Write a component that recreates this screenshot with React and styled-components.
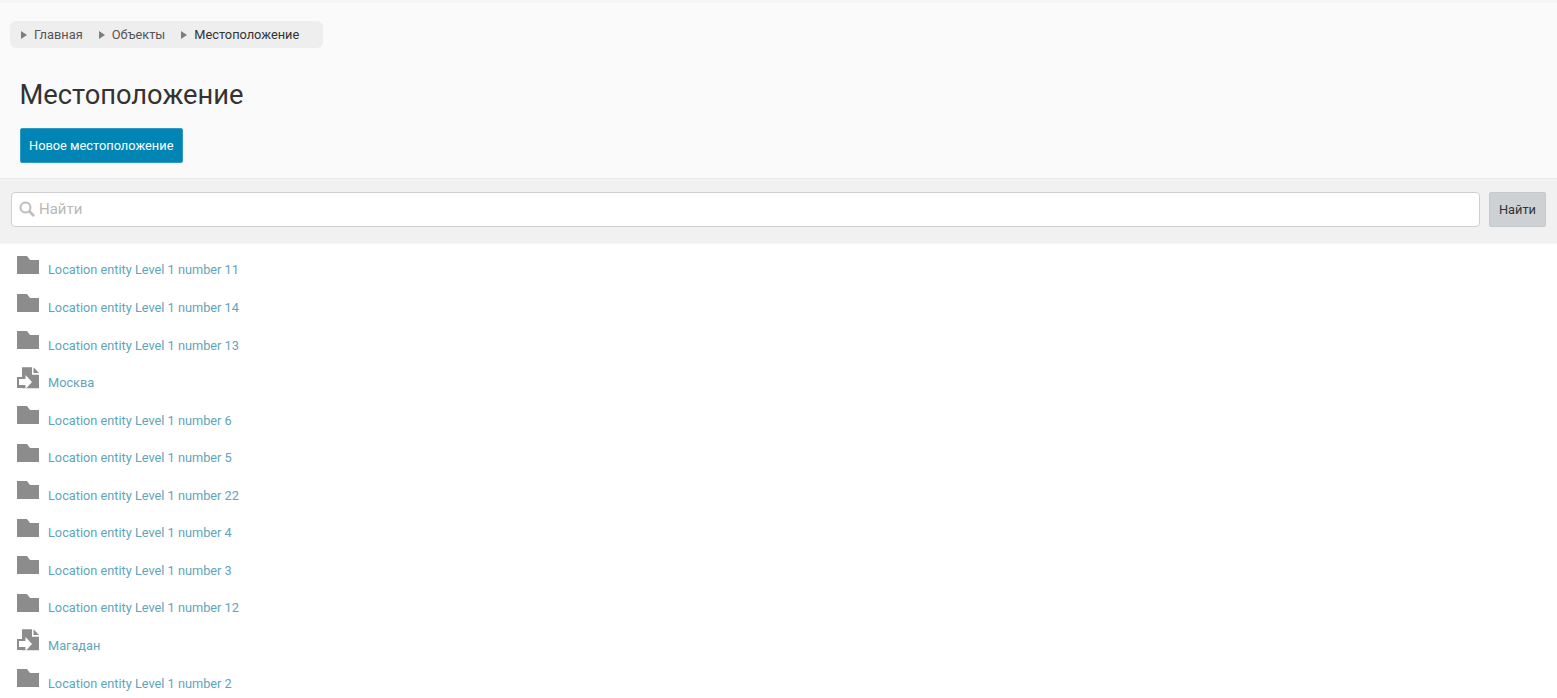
import React from "react";
import styled, { createGlobalStyle } from "styled-components";

const GlobalStyle = createGlobalStyle`
  html, body {
    margin: 0;
    padding: 0;
    height: 100%;
    overflow: hidden;
    background: #fff;
    font-family: Roboto, "Liberation Sans", sans-serif;
  }
`;

const Header = styled.div`
  height: 175px;
  background: #fafafa;
  border-top: 3px solid #f6f6f6;
`;

const Breadcrumbs = styled.ul`
  display: flex;
  align-items: center;
  width: 313px;
  height: 27px;
  margin: 18px 0 0 10px;
  padding: 0;
  box-sizing: border-box;
  list-style: none;
  background: #eeeeee;
  border-radius: 6px;
  font-size: 12.8px;
`;

const Crumb = styled.li`
  display: flex;
  align-items: center;
  margin-left: ${(p) => p.$offset}px;
  color: ${(p) => (p.$current ? "#333" : "#555")};

  &::before {
    content: "";
    width: 0;
    height: 0;
    margin-right: 7px;
    border-style: solid;
    border-width: 4px 0 4px 6px;
    border-color: transparent transparent transparent #7d7d7d;
  }
`;

const Title = styled.h1`
  margin: 32px 0 0 19.5px;
  font-size: 27.3px;
  line-height: 30px;
  font-weight: 400;
  color: #333;
`;

const PrimaryButton = styled.button`
  display: block;
  width: 163.5px;
  height: 35px;
  margin: 18px 0 0 19.5px;
  padding: 0;
  border: 1px solid #2d9bc4;
  border-radius: 2px;
  background: #0085b5;
  color: #fff;
  font: 12.8px Roboto, sans-serif;
`;

const SearchBar = styled.div`
  display: flex;
  align-items: center;
  gap: 9px;
  height: 66px;
  padding: 0 11px 4px 11px;
  box-sizing: border-box;
  background: #f1f1f1;
  border-top: 1px solid #ececec;
  border-bottom: 1px solid #f7f7f7;
`;

const SearchField = styled.div`
  flex: 1;
  display: flex;
  align-items: center;
  gap: 4px;
  height: 35px;
  padding-left: 7px;
  box-sizing: border-box;
  background: #fff;
  border: 1px solid #cfcfcf;
  border-radius: 4px;
  color: #b8b8b8;
  font-size: 15px;
`;

const SearchButton = styled.button`
  width: 57px;
  height: 35px;
  padding: 0;
  background: #ced1d4;
  border: 1px solid #c6c9cc;
  border-radius: 2px;
  color: #333;
  font: 12.8px Roboto, sans-serif;
`;

const List = styled.div`
  display: flex;
  flex-direction: column;
  padding: 8px 0 0 17px;
`;

const Row = styled.div`
  display: flex;
  align-items: flex-start;
  height: 37.56px;
  gap: 9px;
`;

const Icon = styled.svg`
  width: 22px;
  height: 26px;
  flex: none;
  fill: #8c8c8c;
`;

const RowLink = styled.a`
  margin-top: 10.49px;
  font-size: 12.75px;
  line-height: 16px;
  color: #60a5bc;
  text-decoration: none;
`;

const FolderIcon = () => (
  <Icon viewBox="0 0 22 26">
    <path d="M0 4h10l3 4h9v14H0z" />
  </Icon>
);

const EntryIcon = () => (
  <Icon viewBox="0 0 22 26">
    <path d="M5 2.3h10v7.5h7v13.5H5z" />
    <path d="M16.5 2.3 22 8h-5.5z" />
    <path d="M0 12h6v11H0z" />
    <path d="M2 14h6.5v-4l6.5 7-6.5 7v-4H2z" fill="#fff" />
  </Icon>
);

const SearchIcon = () => (
  <svg width="16" height="16" viewBox="0 0 16 16" fill="none" stroke="#bdbdbd">
    <circle cx="6.5" cy="6.5" r="5" strokeWidth="2" />
    <path d="M10.5 10.5 15 15" strokeWidth="2.6" />
  </svg>
);

const items = [
  "Location entity Level 1 number 11",
  "Location entity Level 1 number 14",
  "Location entity Level 1 number 13",
  "Москва",
  "Location entity Level 1 number 6",
  "Location entity Level 1 number 5",
  "Location entity Level 1 number 22",
  "Location entity Level 1 number 4",
  "Location entity Level 1 number 3",
  "Location entity Level 1 number 12",
  "Магадан",
  "Location entity Level 1 number 2",
];

const App = () => (
  <>
    <GlobalStyle />
    <Header>
      <Breadcrumbs>
        <Crumb $offset={11}>Главная</Crumb>
        <Crumb $offset={16}>Объекты</Crumb>
        <Crumb $offset={16} $current>
          Местоположение
        </Crumb>
      </Breadcrumbs>
      <Title>Местоположение</Title>
      <PrimaryButton>Новое местоположение</PrimaryButton>
    </Header>
    <SearchBar>
      <SearchField>
        <SearchIcon />
        Найти
      </SearchField>
      <SearchButton>Найти</SearchButton>
    </SearchBar>
    <List>
      {items.map((name, index) => (
        <Row key={index}>
          {name.startsWith("Location") ? <FolderIcon /> : <EntryIcon />}
          <RowLink href="#">{name}</RowLink>
        </Row>
      ))}
    </List>
  </>
);

export default App;
